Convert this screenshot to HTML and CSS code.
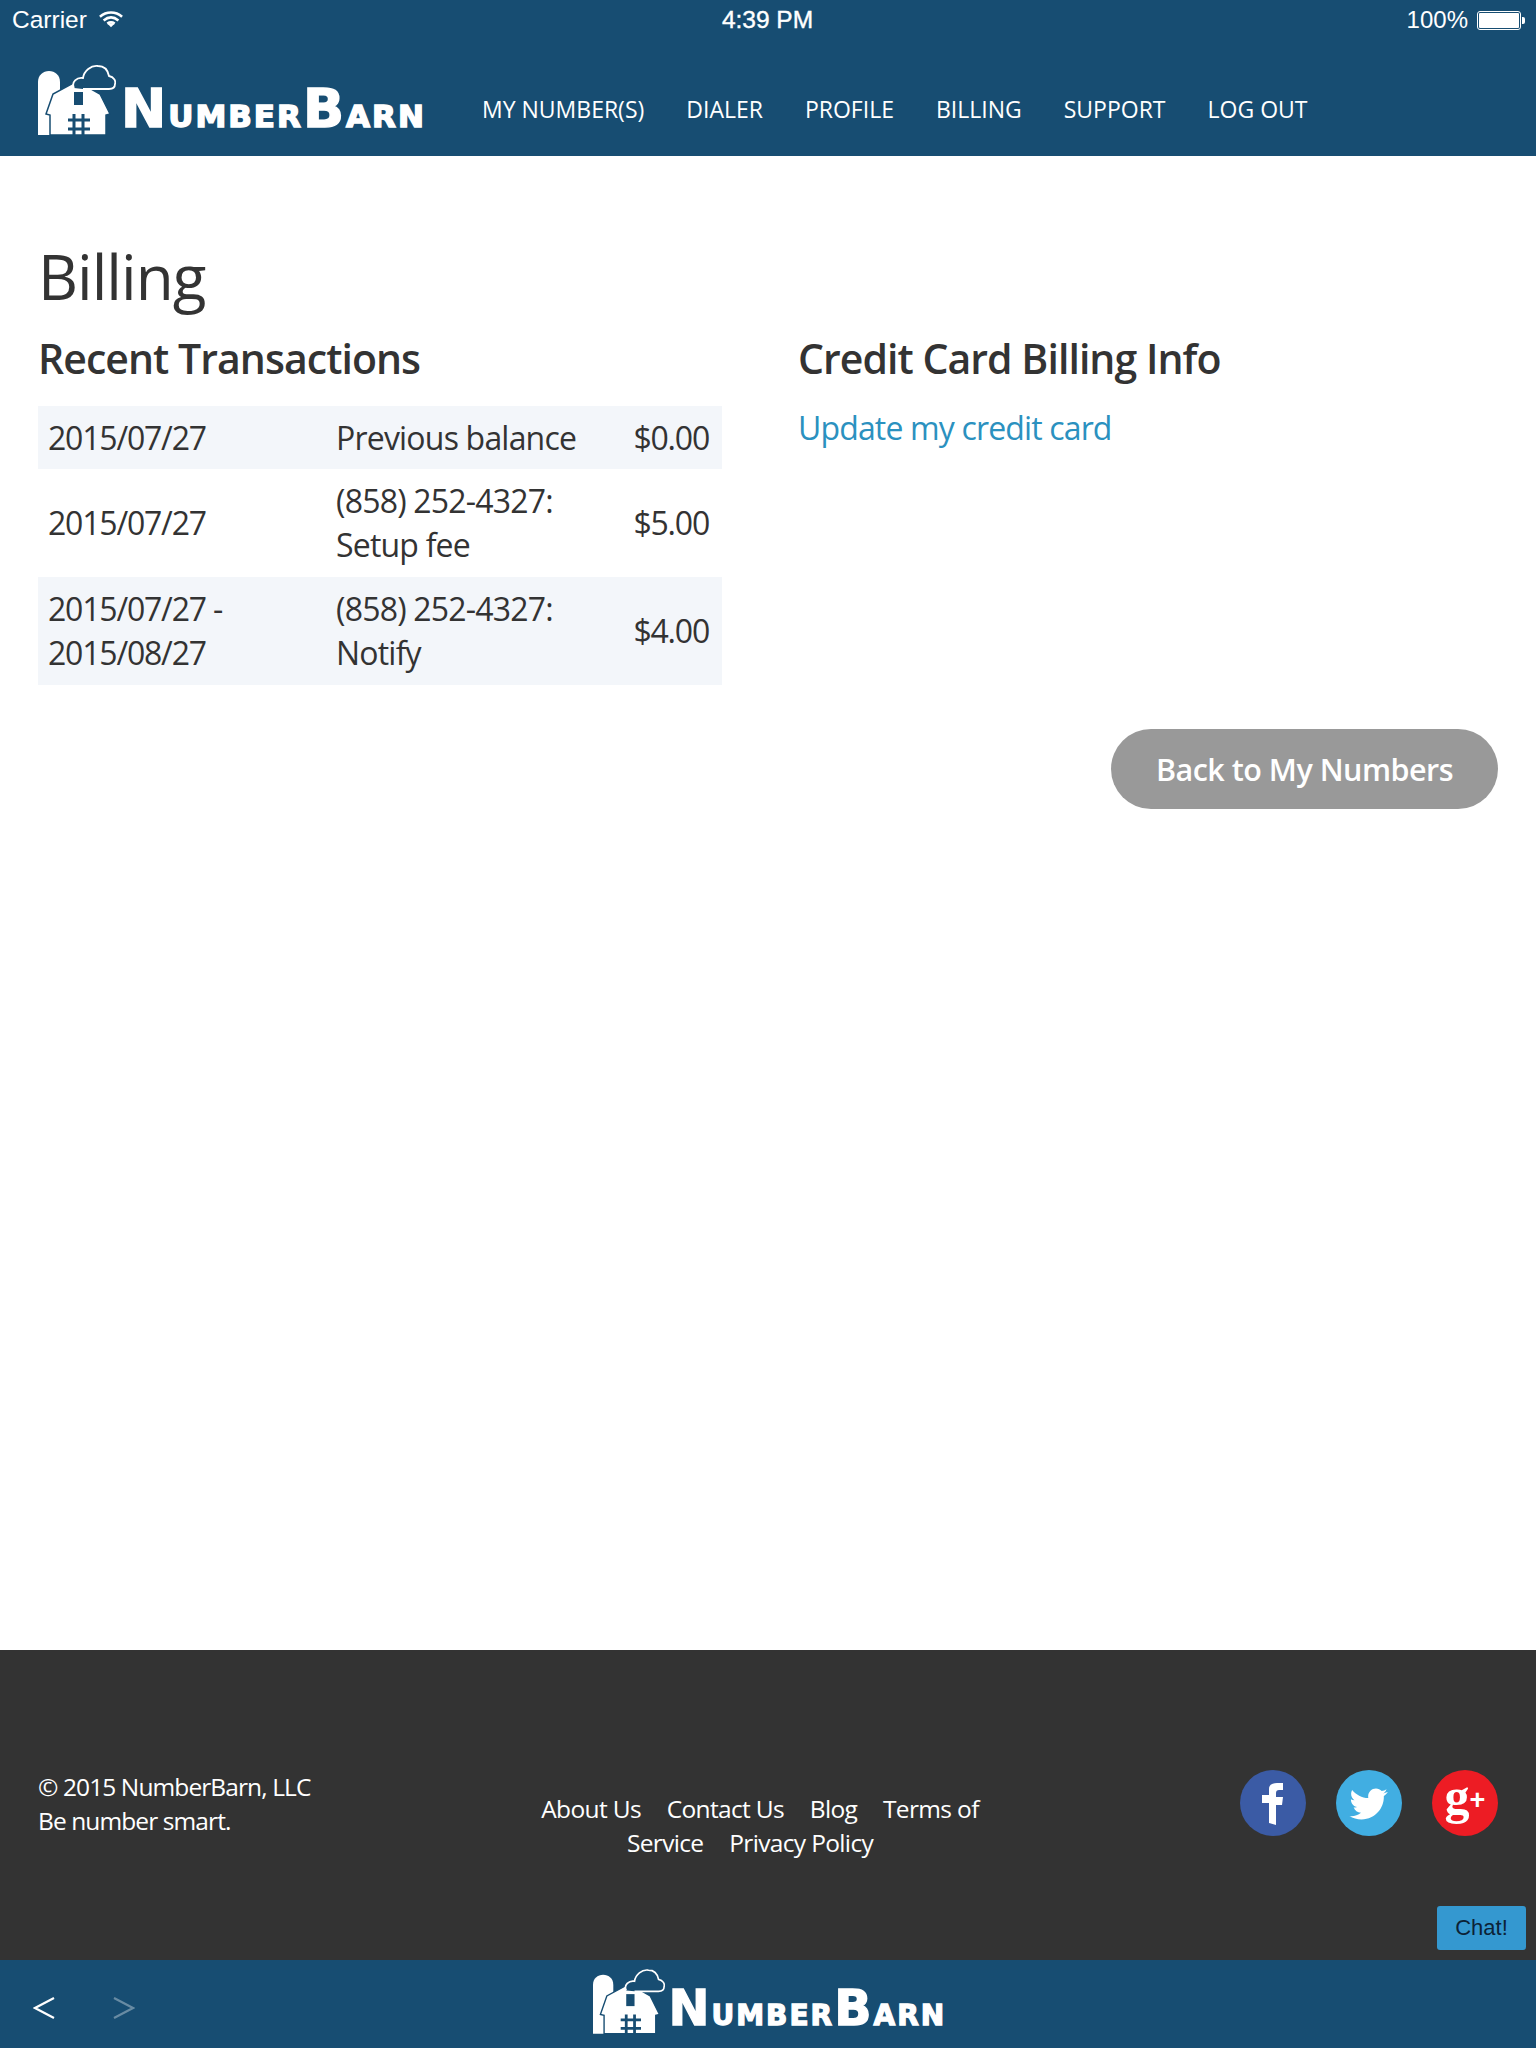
FILE: index.html
```html
<!DOCTYPE html>
<html lang="en">
<head>
<meta charset="utf-8">
<title>NumberBarn Billing</title>
<link rel="stylesheet" href="styles.css">
</head>
<body>
<svg class="defs" width="0" height="0" aria-hidden="true">
  <symbol id="barn" viewBox="0 0 78 72">
    <path d="M0 71V18C0 11 5 7 11 7s11 4 11 11v53z" fill="#fff"/>
    <path d="M8 50l7-20L39 17l23 13 10 20-4 1v20H12V51z" fill="#fff" stroke="#174d72" stroke-width="1.5"/>
    <path d="M36 28h9v13h-9z" fill="#174d72"/>
    <path d="M36 50v21M45 50v21M30 56h22M30 65h22" fill="none" stroke="#174d72" stroke-width="3"/>
    <path d="M36 24c-3-6 3-11 9-10 1-7 8-13 15-12 7 0 10 5 11 10 5 1 7 5 6 8 0 3-2 5-6 5H45" fill="#174d72" stroke="#fff" stroke-width="1.8"/>
  </symbol>
</svg>
<div class="page">
  <header class="header">
    <div class="status">
      <div class="status-left">
        <span>Carrier</span>
        <svg class="wifi" viewBox="0 0 26 18"><path d="M1 6.500C8 .5 18 .5 25 6.500M5 10.500c5-4 11-4 16 0M9 14c3-2 5-2 8 0" fill="none" stroke="#fff" stroke-width="2.800"/><path d="M13 18l-3.500-3.500c2-1 5-1 7 0z" fill="#fff"/></svg>
      </div>
      <div class="status-time">4:39 PM</div>
      <div class="status-right">
        <span>100%</span>
        <span class="battery"><span class="battery-fill"></span></span>
      </div>
    </div>
    <div class="navbar">
      <a class="logo">
        <svg class="logo-mark"><use href="#barn"/></svg>
        <span class="logo-text"><span class="logo-cap">N</span>umber<span class="logo-cap">B</span>arn</span>
      </a>
      <nav class="nav">
        <a>MY NUMBER(S)</a>
        <a>DIALER</a>
        <a>PROFILE</a>
        <a>BILLING</a>
        <a>SUPPORT</a>
        <a>LOG OUT</a>
      </nav>
    </div>
  </header>

  <main class="main">
    <h1 class="title">Billing</h1>
    <div class="columns">
      <section class="col-left">
        <h2 class="subtitle">Recent Transactions</h2>
        <table class="tx">
          <tr class="odd single"><td class="c-date">2015/07/27</td><td class="c-desc">Previous balance</td><td class="c-amt">$0.00</td></tr>
          <tr><td class="c-date">2015/07/27</td><td class="c-desc">(858) 252-4327:<br>Setup fee</td><td class="c-amt">$5.00</td></tr>
          <tr class="odd"><td class="c-date">2015/07/27 -<br>2015/08/27</td><td class="c-desc">(858) 252-4327:<br>Notify</td><td class="c-amt">$4.00</td></tr>
        </table>
      </section>
      <section class="col-right">
        <h2 class="subtitle">Credit Card Billing Info</h2>
        <a class="update">Update my credit card</a>
      </section>
    </div>
    <div class="actions"><a class="back">Back to My Numbers</a></div>
  </main>

  <footer class="footer">
    <div class="copy">© 2015 NumberBarn, LLC<br>Be number smart.</div>
    <div class="links">
      <a>About Us</a> <a>Contact Us</a> <a>Blog</a> <a>Terms of</a> <a>Service</a> <a class="last">Privacy Policy</a>
    </div>
    <div class="social">
      <span class="soc fb">
        <svg viewBox="0 0 66 66"><path d="M29 53V33h-7v-8h7v-6c0-4 3-6 8-6h6v7h-4c-2 0-3 1-3 3v4h7l-1 8h-6v20z" fill="#fff"/></svg>
      </span>
      <span class="soc tw">
        <svg viewBox="0 0 24 24"><path transform="translate(4.500 5) scale(.62)" d="M23 4.900c-.8.4-1.700.6-2.600.8.9-.6 1.600-1.400 2-2.500-.9.5-1.800.9-2.900 1.100-.8-.9-2-1.500-3.300-1.500-2.500 0-4.600 2-4.600 4.600 0 .4 0 .7.1 1C7.900 8.200 4.500 6.400 2.200 3.600c-.4.7-.6 1.500-.6 2.300 0 1.600.8 3 2 3.800-.8 0-1.500-.2-2.100-.6v.1c0 2.200 1.600 4.100 3.700 4.500-.4.100-.8.200-1.200.200-.3 0-.6 0-.9-.1.600 1.800 2.300 3.200 4.300 3.200-1.600 1.200-3.600 2-5.700 2-.4 0-.7 0-1.100-.1 2 1.300 4.500 2 7.100 2 8.500 0 13.100-7 13.100-13.100v-.6c.9-.6 1.700-1.500 2.300-2.400z" fill="#fff"/></svg>
      </span>
      <span class="soc gp"><span class="gp-g">g</span><span class="gp-plus">+</span></span>
    </div>
    <a class="chat">Chat!</a>
  </footer>

  <div class="bottom">
    <div class="arrows">
      <svg class="arrow" viewBox="0 0 22 22"><path d="M21 1L2 11l19 10" fill="none" stroke="#fff" stroke-width="2.200"/></svg>
      <svg class="arrow dim" viewBox="0 0 22 22"><path d="M1 1l19 10L1 21" fill="none" stroke="#fff" stroke-width="2.200"/></svg>
    </div>
    <a class="logo logo-small">
      <svg class="logo-mark"><use href="#barn"/></svg>
      <span class="logo-text"><span class="logo-cap">N</span>umber<span class="logo-cap">B</span>arn</span>
    </a>
  </div>
</div>
</body>
</html>
```

FILE: styles.css
```css
* { box-sizing: border-box; }
html, body { margin: 0; padding: 0; }
body { font-family: "Open Sans", "Liberation Sans", sans-serif; color: #333; background: #fff; }
.defs { position: absolute; }
.page { width: 1536px; height: 2048px; display: flex; flex-direction: column; }

/* Header */
.header { height: 156px; background: #174d72; color: #fff; flex: none; overflow: hidden; }
.status { height: 40px; padding: 0 13px 0 12px; display: grid; grid-template-columns: 1fr auto 1fr; align-items: center; font-family: "Liberation Sans", Arial, sans-serif; font-size: 24px; }
.status-left { display: flex; align-items: center; gap: 12px; font-size: 24.500px; }
.wifi { width: 24px; height: 18px; margin-top: -3px; }
.status-time { font-size: 24.500px; font-weight: 400; -webkit-text-stroke: .4px #fff; }
.status-right { display: flex; justify-content: flex-end; align-items: center; gap: 9px; }
.battery { position: relative; width: 44px; height: 19px; border: 1px solid #fff; border-radius: 3px; padding: 1px; display: block; margin-right: 2px; }
.battery::after { content: ""; position: absolute; right: -5px; top: 5px; width: 3px; height: 7px; background: #fff; border-radius: 0 2px 2px 0; }
.battery-fill { display: block; height: 100%; background: #fff; border-radius: 1px; }

.navbar { display: flex; align-items: flex-start; padding-left: 38px; height: 116px; }
.logo { display: flex; align-items: flex-start; color: #fff; flex: none; }
.logo-mark { width: 78px; height: 72px; margin-top: 24px; display: block; flex: none; }
.logo-text { font-family: "DejaVu Sans", sans-serif; font-weight: 700; font-variant: small-caps; font-size: 44px; line-height: 54px; margin: 42px 0 0 5px; letter-spacing: 2px; -webkit-text-stroke: 1.500px #fff; white-space: nowrap; width: 303px; display: block; }
.logo-cap { font-size: 54px; }
.nav { display: flex; gap: 42px; margin: 53px 0 0 58px; font-size: 23px; line-height: 32px; color: #fff; }

/* Main */
.main { flex: 1; padding: 82px 38px 0; }
.title { margin: 0; font-size: 62px; line-height: 76px; font-weight: 400; letter-spacing: -1px; }
.columns { display: grid; grid-template-columns: 684px 1fr; column-gap: 76px; margin-top: 19px; }
.subtitle { margin: 0; font-size: 41px; line-height: 50px; font-weight: 600; letter-spacing: -.95px; }
.tx { width: 684px; margin-top: 23px; border-collapse: collapse; font-size: 32px; line-height: 44px; letter-spacing: -1.200px; }
.tx td { padding: 10px 0; vertical-align: middle; }
.tx .single td { padding: 9.500px 0; }
.tx .odd { background: #f3f6fa; }
.c-date { width: 298px; padding-left: 10px !important; }
.c-desc { width: 274px; letter-spacing: -.8px; }
.c-amt { text-align: right; padding-right: 13px !important; }
.update { display: block; margin-top: 23px; font-size: 32px; line-height: 44px; color: #2b91bf; letter-spacing: -.85px; }
.actions { display: flex; justify-content: flex-end; margin-top: 44px; }
.back { display: block; width: 387px; height: 80px; border-radius: 40px; background: #999; color: #fff; font-size: 30.500px; font-weight: 600; line-height: 80px; text-align: center; letter-spacing: -.5px; }

/* Footer */
.footer { position: relative; height: 310px; flex: none; background: #333; color: #fff; padding: 120px 38px 0; display: grid; grid-template-columns: 490px 464px 1fr; align-items: start; font-size: 24.500px; line-height: 34px; letter-spacing: -.9px; }
.copy { margin-top: 0; }
.links { text-align: center; margin-top: 22px; letter-spacing: -.65px; }
.links a { margin: 0 10px; }
.links .last { margin-right: 30px; }
.social { display: flex; justify-content: flex-end; gap: 30px; margin-top: 0; }
.soc { width: 66px; height: 66px; border-radius: 50%; display: flex; align-items: center; justify-content: center; flex: none; }
.soc svg { width: 66px; height: 66px; display: block; }
.fb { background: #3b5ba5; }
.tw { background: #41aee2; }
.gp { background: #ed1c24; color: #fff; font-family: "Liberation Serif", serif; font-weight: 700; letter-spacing: 0; }
.gp-g { font-size: 50px; line-height: 50px; margin-top: -14px; }
.gp-plus { font-family: "Liberation Sans", sans-serif; font-weight: 700; font-size: 27px; line-height: 27px; margin: -6px 0 0 0; }
.chat { position: absolute; right: 10px; bottom: 10px; width: 89px; height: 44px; background: #3498d0; border-radius: 3px; color: #0c2236; font-family: "Liberation Sans", Arial, sans-serif; font-size: 22px; line-height: 44px; text-align: center; letter-spacing: 0; }

/* Bottom bar */
.bottom { position: relative; height: 88px; flex: none; background: #174d72; display: flex; align-items: flex-start; justify-content: center; }
.arrows { position: absolute; left: 33px; top: 37px; display: flex; gap: 58px; }
.arrow { width: 22px; height: 22px; display: block; }
.arrow.dim { opacity: .35; }
.logo-small { margin-left: 1px; }
.logo-small .logo-mark { width: 72px; height: 67px; margin-top: 8px; }
.logo-small .logo-text { font-size: 40px; line-height: 50px; margin: 24px 0 0 4px; letter-spacing: 2px; width: 276px; -webkit-text-stroke: 1.300px #fff; }
.logo-small .logo-cap { font-size: 49px; }
```
